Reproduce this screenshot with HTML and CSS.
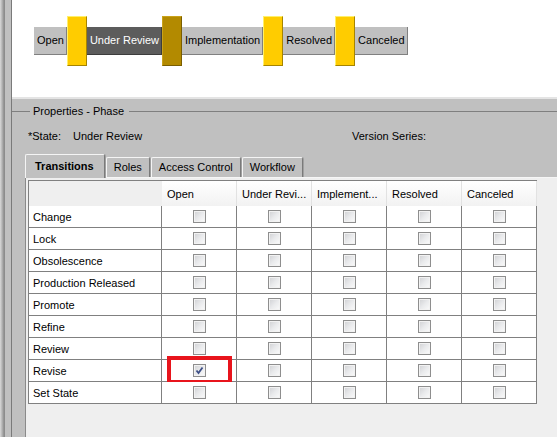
FILE: index.html
```html
<!DOCTYPE html>
<html lang="en">
<head>
    <meta charset="UTF-8">
    <title>Properties - Phase</title>
    <link rel="stylesheet" href="styles.css">
</head>
<body>
    <div class="window">
        <div class="grip"></div>
        <div class="main">
            <div class="diagram">
                <div class="flow">
                    <span class="phase">Open</span>
                    <span class="link"></span>
                    <span class="phase current">Under Review</span>
                    <span class="link active"></span>
                    <span class="phase">Implementation</span>
                    <span class="link"></span>
                    <span class="phase">Resolved</span>
                    <span class="link"></span>
                    <span class="phase">Canceled</span>
                </div>
            </div>

            <div class="props">
                <div class="group-title">Properties - Phase</div>

                <div class="state-row">
                    <span>*State:</span>
                    <span>Under Review</span>
                    <span>Version Series:</span>
                </div>

                <div class="tabs">
                    <div class="tab selected">Transitions</div>
                    <div class="tab">Roles</div>
                    <div class="tab">Access Control</div>
                    <div class="tab">Workflow</div>
                </div>

                <div class="tab-panel">
                    <table class="grid" id="grid">
                        <colgroup>
                            <col class="col-label">
                            <col><col><col><col><col>
                        </colgroup>
                        <thead>
                            <tr>
                                <th class="corner"></th>
                                <th>Open</th>
                                <th>Under Revi...</th>
                                <th>Implement...</th>
                                <th>Resolved</th>
                                <th>Canceled</th>
                            </tr>
                        </thead>
                        <tbody id="rows"></tbody>
                    </table>
                </div>
            </div>
        </div>
    </div>

    <script>
        const actions = ['Change', 'Lock', 'Obsolescence', 'Production Released',
                         'Promote', 'Refine', 'Review', 'Revise', 'Set State'];
        const tbody = document.getElementById('rows');
        const tick = '<svg width="11" height="11" viewBox="0 0 11 11"><path d="M2.5 5.5 L4.5 8 L8.5 2.5" fill="none" stroke="#3d4f86" stroke-width="1.8"/></svg>';

        actions.forEach(action => {
            const tr = document.createElement('tr');
            let html = `<td class="label">${action}</td>`;
            for (let i = 0; i < 5; i++) {
                // only Revise -> Open is allowed
                if (action === 'Revise' && i === 0) {
                    html += `<td class="box"><span class="check on">${tick}</span><span class="highlight"></span></td>`;
                } else {
                    html += '<td class="box"><span class="check"></span></td>';
                }
            }
            tr.innerHTML = html;
            tbody.appendChild(tr);
        });
    </script>
</body>
</html>
```

FILE: styles.css
```css
html, body {
    margin: 0;
    height: 100%;
}

body {
    font-family: 'Liberation Sans', Arial, sans-serif;
    font-size: 11px;
    color: #000;
    background: #c0c0c0;
    overflow: hidden;
}

.window {
    display: flex;
    height: 437px;
}

.grip {
    width: 11px;
    flex-shrink: 0;
    background: linear-gradient(to right, #dadada 0, #a2a2a2 3px, #8c8c8c 4px, #8c8c8c 5px, #c0c0c0 5px);
}

.main {
    flex: 1;
    display: flex;
    flex-direction: column;
    border-left: 1px solid #7a7a7a;
    min-width: 0;
}

/* phase diagram */
.diagram {
    height: 97px;
    background: #fff;
    border-bottom: 2px solid #e4e4e4;
    box-sizing: content-box;
}

.flow {
    display: flex;
    align-items: center;
    padding: 16px 0 0 22px;
}

.phase {
    height: 28px;
    box-sizing: border-box;
    line-height: 27px;
    padding: 0 2px 0 3px;
    background: #c0c0c0;
    border-right: 1px solid #808080;
    border-bottom: 1px solid #808080;
    white-space: nowrap;
}

.phase.current {
    background: #5c5c5c;
    color: #fff;
    border-color: #3c3c3c;
}

.link {
    width: 20px;
    height: 50px;
    box-sizing: border-box;
    background: #ffcc00;
    border-top: 1px solid #fff06a;
    border-left: 1px solid #fff06a;
    border-right: 1px solid #a68400;
    border-bottom: 1px solid #a68400;
}

.link.active {
    background: #b38a00;
    border-color: #c9a21a #7a5e00 #7a5e00 #c9a21a;
}

/* properties group */
.props {
    flex: 1;
    display: flex;
    flex-direction: column;
    padding-top: 6px;
    min-height: 0;
}

.group-title {
    display: flex;
    align-items: center;
    gap: 3px;
    height: 13px;
    line-height: 13px;
}

.group-title::before {
    content: '';
    width: 18px;
    height: 1px;
    background: #7f7f7f;
}

.group-title::after {
    content: '';
    flex: 1;
    height: 1px;
    margin-left: 2px;
    background: #7f7f7f;
}

.state-row {
    display: grid;
    grid-template-columns: 45px 279px auto;
    padding-left: 16px;
    margin-top: 12px;
    line-height: 13px;
}

/* tabs */
.tabs {
    display: flex;
    align-items: flex-end;
    gap: 1px;
    height: 23px;
    margin: 11px 0 0 13px;
}

.tab {
    height: 20px;
    box-sizing: border-box;
    line-height: 19px;
    padding: 0 7px;
    border-top: 1px solid #f4f4f4;
    border-left: 1px solid #f4f4f4;
    border-right: 1px solid #7a7a7a;
    border-radius: 2px 2px 0 0;
    box-shadow: 1px 0 0 #a0a0a0;
}

.tab.selected {
    height: 24px;
    line-height: 22px;
    padding: 0 10px 0 9px;
    margin-bottom: -1px;
    font-weight: bold;
    background: #c0c0c0;
    position: relative;
}

.tab-panel {
    flex: 1;
    margin-left: 13px;
    padding: 2px 0 0 2px;
    background: #efefef;
    border-top: 1px solid #f6f6f6;
    border-left: 1px solid #8a8a8a;
}

/* transitions grid */
.grid {
    table-layout: fixed;
    width: 509px;
    border-collapse: separate;
    border-spacing: 0;
    border-top: 1px solid #808080;
    border-left: 1px solid #808080;
}

.grid col {
    width: 75px;
}

.grid col.col-label {
    width: 133px;
}

.grid th {
    height: 25px;
    padding: 0 0 0 5px;
    text-align: left;
    font-weight: normal;
    white-space: nowrap;
    overflow: hidden;
    background: linear-gradient(#ffffff, #f2f2f2);
    border-right: 1px solid #e2e2e2;
    box-sizing: border-box;
}

.grid th.corner {
    background: #efefef;
    border-right: none;
}

.grid td {
    height: 22px;
    box-sizing: border-box;
    padding: 0;
    background: #fff;
    border-right: 1px solid #808080;
    border-bottom: 1px solid #808080;
}

.grid td.label {
    padding-left: 4px;
}

.grid td.box {
    text-align: center;
    position: relative;
}

.check {
    display: inline-block;
    width: 13px;
    height: 13px;
    box-sizing: border-box;
    vertical-align: middle;
    border: 1px solid #8e8e8e;
    background: linear-gradient(135deg, #cfd0d3 0, #e9eaec 50%, #fbfbfb 100%);
    box-shadow: inset 0 0 0 1px #f2f2f2;
}

.check svg {
    display: block;
}

.highlight {
    position: absolute;
    left: 5px;
    top: -4px;
    width: 65px;
    height: 28px;
    box-sizing: border-box;
    border: 4px solid #e8141c;
}
```
